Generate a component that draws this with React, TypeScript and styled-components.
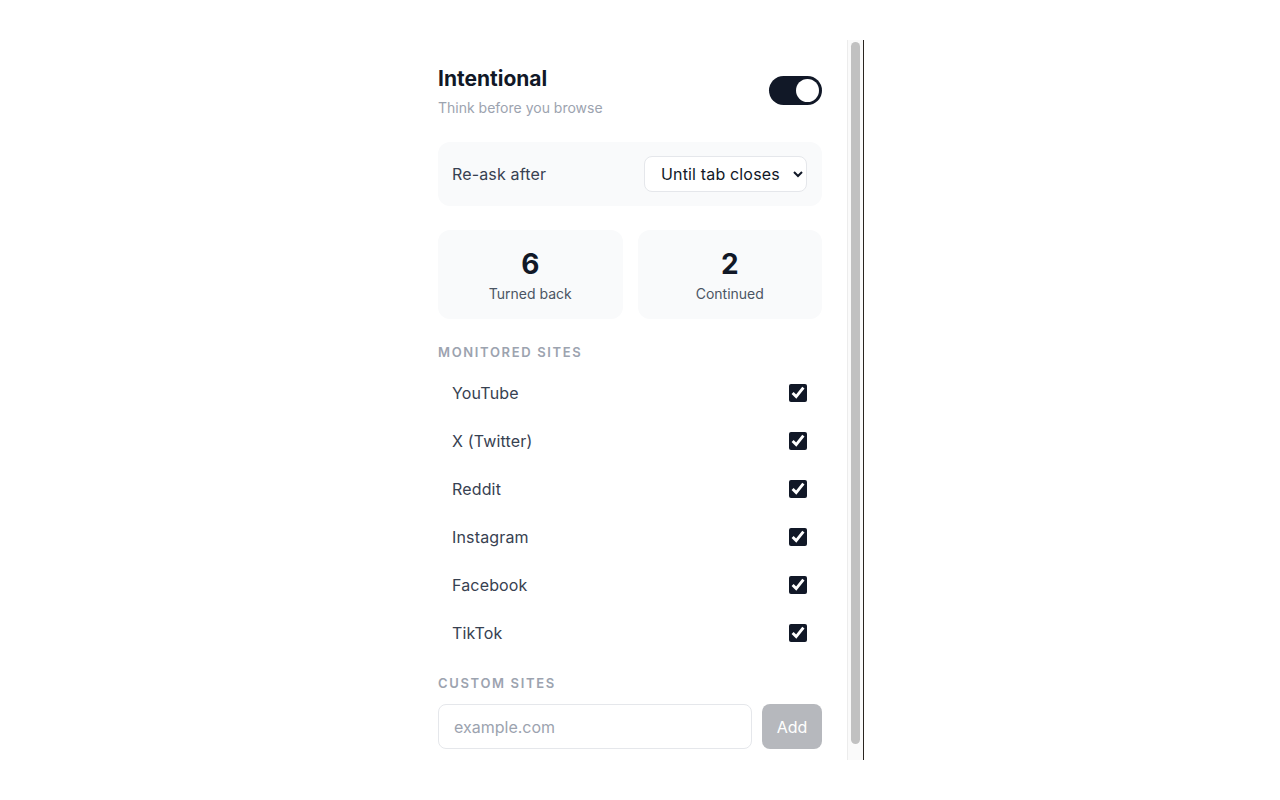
import { useState } from 'react';
import styled, { createGlobalStyle } from 'styled-components';

const INK = '#111827';
const MUTED = '#9ca3af';
const SURFACE = '#f9fafb';
const LINE = '#e5e7eb';

const SITES = ['YouTube', 'X (Twitter)', 'Reddit', 'Instagram', 'Facebook', 'TikTok'];

const GlobalStyle = createGlobalStyle`
  body {
    margin: 0;
    background: #ffffff;
    font-family: Inter, "Noto Sans", "Liberation Sans", sans-serif;
    color: ${INK};
  }
`;

export default function App() {
  const [enabled, setEnabled] = useState(true);
  const [checked, setChecked] = useState<Record<string, boolean>>(
    Object.fromEntries(SITES.map(s => [s, true]))
  );
  const [custom, setCustom] = useState('');

  return (
    <>
      <GlobalStyle />
      <StyledFrame>
        <StyledScroller>
          <StyledHeader>
            <div>
              <StyledTitle>Intentional</StyledTitle>
              <StyledSubtitle>Think before you browse</StyledSubtitle>
            </div>
            <StyledToggle $on={enabled} onClick={() => setEnabled(v => !v)} aria-label='Toggle' />
          </StyledHeader>

          <StyledSettingCard>
            <StyledSettingLabel>Re-ask after</StyledSettingLabel>
            <StyledSelect defaultValue='tab'>
              <option value='tab'>Until tab closes</option>
              <option value='15'>15 minutes</option>
              <option value='60'>1 hour</option>
            </StyledSelect>
          </StyledSettingCard>

          <StyledStats>
            <StyledStatCard>
              <StyledStatValue>6</StyledStatValue>
              <StyledStatLabel>Turned back</StyledStatLabel>
            </StyledStatCard>
            <StyledStatCard>
              <StyledStatValue>2</StyledStatValue>
              <StyledStatLabel>Continued</StyledStatLabel>
            </StyledStatCard>
          </StyledStats>

          <StyledSectionLabel>Monitored sites</StyledSectionLabel>
          <StyledSiteList>
            {SITES.map(site => (
              <StyledSiteRow key={site}>
                <span>{site}</span>
                <StyledCheckbox
                  type='checkbox'
                  checked={checked[site]}
                  onChange={e => setChecked(c => ({ ...c, [site]: e.target.checked }))}
                />
              </StyledSiteRow>
            ))}
          </StyledSiteList>

          <StyledSectionLabel $spaced>Custom sites</StyledSectionLabel>
          <StyledAddRow>
            <StyledInput
              type='text'
              placeholder='example.com'
              value={custom}
              onChange={e => setCustom(e.target.value)}
            />
            <StyledAddButton disabled={!custom.trim()}>Add</StyledAddButton>
          </StyledAddRow>
        </StyledScroller>

        <StyledScrollTrack>
          <StyledScrollThumb />
        </StyledScrollTrack>
      </StyledFrame>
    </>
  );
}

const StyledFrame = styled.div`
  box-sizing: border-box;
  display: flex;
  width: 449px;
  height: 720px;
  margin: 40px 0 0 calc(50% - 225px);
  border-right: 1px solid #2a2520;
`;

const StyledScroller = styled.div`
  flex: 1;
  min-width: 0;
  padding: 25px 25px 24px 23px;
  overflow-y: auto;
  scrollbar-width: none;

  &::-webkit-scrollbar {
    display: none;
  }
`;

const StyledScrollTrack = styled.div`
  box-sizing: border-box;
  width: 16px;
  flex-shrink: 0;
  padding: 2px 3px 0 3px;
  background: #fafafa;
  border-left: 1px solid #ececec;
`;

const StyledScrollThumb = styled.div`
  height: 702px;
  border-radius: 5px;
  background: #c1c1c1;
`;

const StyledHeader = styled.header`
  display: flex;
  align-items: flex-start;
  justify-content: space-between;
  margin-bottom: 24px;
`;

const StyledTitle = styled.h1`
  margin: 0;
  font-size: 21px;
  line-height: 28px;
  font-weight: 700;
  color: ${INK};
`;

const StyledSubtitle = styled.p`
  margin: 5px 0 0;
  font-size: 14px;
  line-height: 20px;
  color: ${MUTED};
`;

const StyledToggle = styled.button<{ $on: boolean }>`
  position: relative;
  width: 53px;
  height: 29px;
  margin-top: 11px;
  padding: 0;
  border: none;
  border-radius: 15px;
  background: ${p => (p.$on ? INK : '#d1d5db')};
  cursor: pointer;

  &::after {
    content: '';
    position: absolute;
    top: 3px;
    left: ${p => (p.$on ? '27px' : '3px')};
    width: 23px;
    height: 23px;
    border-radius: 50%;
    background: #ffffff;
  }
`;

const StyledSettingCard = styled.div`
  display: flex;
  align-items: center;
  justify-content: space-between;
  padding: 14px 15px 14px 14px;
  border-radius: 12px;
  background: ${SURFACE};
  margin-bottom: 24px;
`;

const StyledSettingLabel = styled.span`
  font-size: 16px;
  color: #374151;
  letter-spacing: 0.01em;
`;

const StyledSelect = styled.select`
  height: 36px;
  padding: 0 10px 0 12px;
  font-family: inherit;
  font-size: 16px;
  letter-spacing: 0.01em;
  color: ${INK};
  background: #ffffff;
  border: 1px solid ${LINE};
  border-radius: 8px;
  outline: none;
`;

const StyledStats = styled.div`
  display: grid;
  grid-template-columns: 1fr 1fr;
  gap: 15px;
  margin-bottom: 24px;
`;

const StyledStatCard = styled.div`
  display: flex;
  flex-direction: column;
  align-items: center;
  padding: 16px 16px 15px;
  border-radius: 12px;
  background: ${SURFACE};
`;

const StyledStatValue = styled.div`
  font-size: 28px;
  line-height: 36px;
  font-weight: 700;
  color: ${INK};
`;

const StyledStatLabel = styled.div`
  margin-top: 2px;
  font-size: 14px;
  line-height: 20px;
  color: #4b5563;
`;

const StyledSectionLabel = styled.h2<{ $spaced?: boolean }>`
  margin: ${p => (p.$spaced ? '17px 0 12px' : '0 0 8px')};
  font-size: 13px;
  line-height: 18px;
  font-weight: 600;
  letter-spacing: 1.65px;
  text-transform: uppercase;
  color: ${MUTED};
`;

const StyledSiteList = styled.ul`
  margin: 0;
  padding: 0;
  list-style: none;
`;

const StyledSiteRow = styled.li`
  display: flex;
  align-items: center;
  justify-content: space-between;
  height: 48px;
  padding: 0 15px 0 14px;
  font-size: 16px;
  letter-spacing: 0.01em;
  color: #374151;
`;

const StyledCheckbox = styled.input`
  width: 18px;
  height: 18px;
  margin: 0;
  accent-color: ${INK};
  cursor: pointer;
`;

const StyledAddRow = styled.div`
  display: flex;
  gap: 10px;
`;

const StyledInput = styled.input`
  flex: 1;
  min-width: 0;
  box-sizing: border-box;
  height: 45px;
  padding: 0 15px;
  font-family: inherit;
  font-size: 16px;
  color: ${INK};
  border: 1px solid ${LINE};
  border-radius: 8px;
  outline: none;

  &::placeholder {
    color: ${MUTED};
  }
`;

const StyledAddButton = styled.button`
  width: 60px;
  height: 45px;
  border: none;
  border-radius: 8px;
  background: ${INK};
  color: #ffffff;
  font-family: inherit;
  font-size: 16px;
  cursor: pointer;

  &:disabled {
    opacity: 0.3;
    cursor: default;
  }
`;
